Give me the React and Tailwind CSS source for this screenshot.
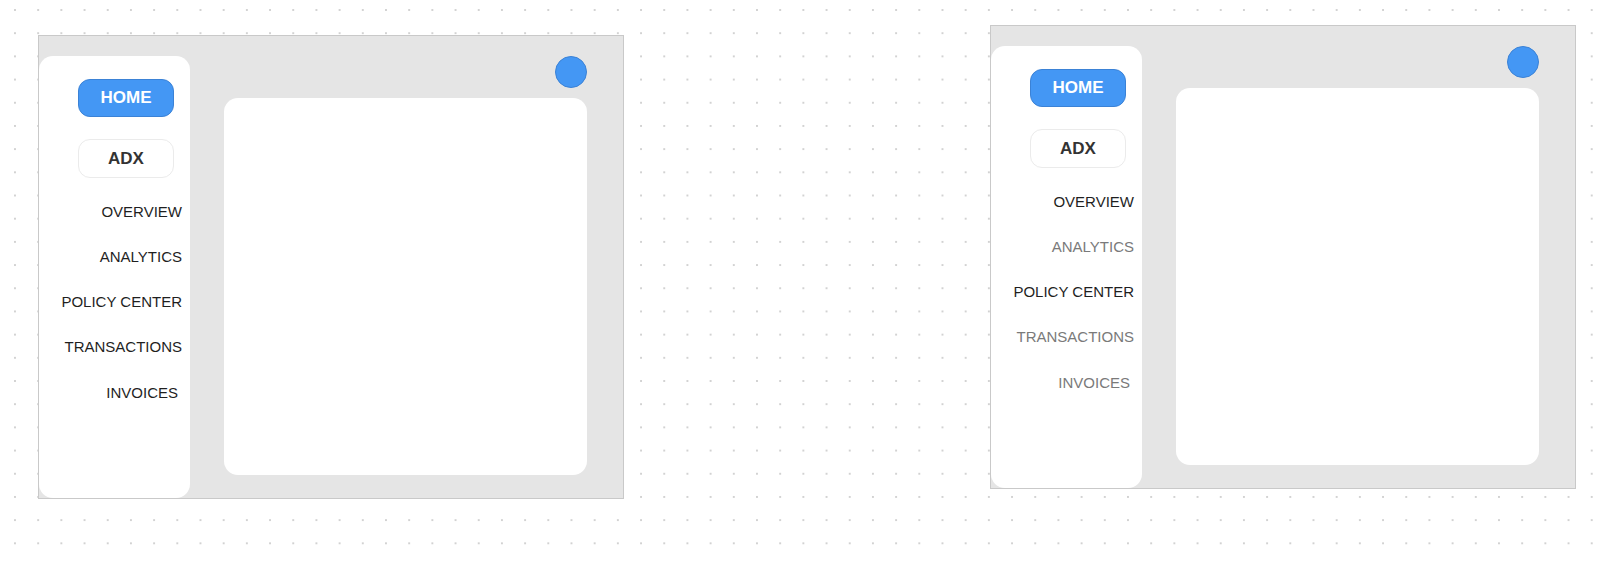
import React from 'react';

const NAV = ['OVERVIEW', 'ANALYTICS', 'POLICY CENTER', 'TRANSACTIONS', 'INVOICES'];

function Frame({ muted = [], className = '' }) {
  return (
    <div className={`flex w-[586px] h-[464px] shrink-0 border border-[#c9c9c9] bg-[#e5e5e5] ${className}`}>
      {/* Sidebar */}
      <aside className="mt-[20px] w-[151px] shrink-0 rounded-[14px] bg-white pt-[23px]">
        <div className="ml-[39px] flex flex-col gap-[22px]">
          <button className="flex h-[38px] w-[96px] items-center justify-center rounded-[12px] border border-[#3b82d6] bg-[#4497f4] text-[17px] font-bold text-white">
            HOME
          </button>
          <button className="flex h-[39px] w-[96px] items-center justify-center rounded-[12px] border border-[#ebebeb] bg-white text-[17px] font-bold text-[#333]">
            ADX
          </button>
        </div>
        <nav className="mt-[24px] flex flex-col items-end gap-[25px] pr-[8px]">
          {NAV.map((item) => (
            <span
              key={item}
              className={`text-[15px] leading-[20px] ${muted.includes(item) ? 'text-[#7a7a7a]' : 'text-[#1f1f1f]'} ${
                item === 'INVOICES' ? 'mr-[4px] mt-[1px]' : ''
              }`}
            >
              {item}
            </span>
          ))}
        </nav>
      </aside>

      {/* Main area */}
      <div className="ml-[34px] flex w-[363px] flex-col pt-[20px]">
        <div className="h-[32px] w-[32px] self-end rounded-full border border-[#3b82d6] bg-[#4497f4]" />
        <div className="mt-[10px] h-[377px] rounded-[14px] bg-white" />
      </div>
    </div>
  );
}

export default function App() {
  return (
    <div className="flex h-[564px] w-full items-start bg-white bg-[radial-gradient(circle,#d2d2d2_0.9px,transparent_1.4px)] bg-[size:23.2px_23.2px] bg-[position:3.4px_-1.6px] font-['Liberation_Sans',Arial,sans-serif]">
      <Frame className="ml-[38px] mt-[35px]" />
      <Frame className="ml-[366px] mt-[25px]" muted={['ANALYTICS', 'TRANSACTIONS', 'INVOICES']} />
    </div>
  );
}
